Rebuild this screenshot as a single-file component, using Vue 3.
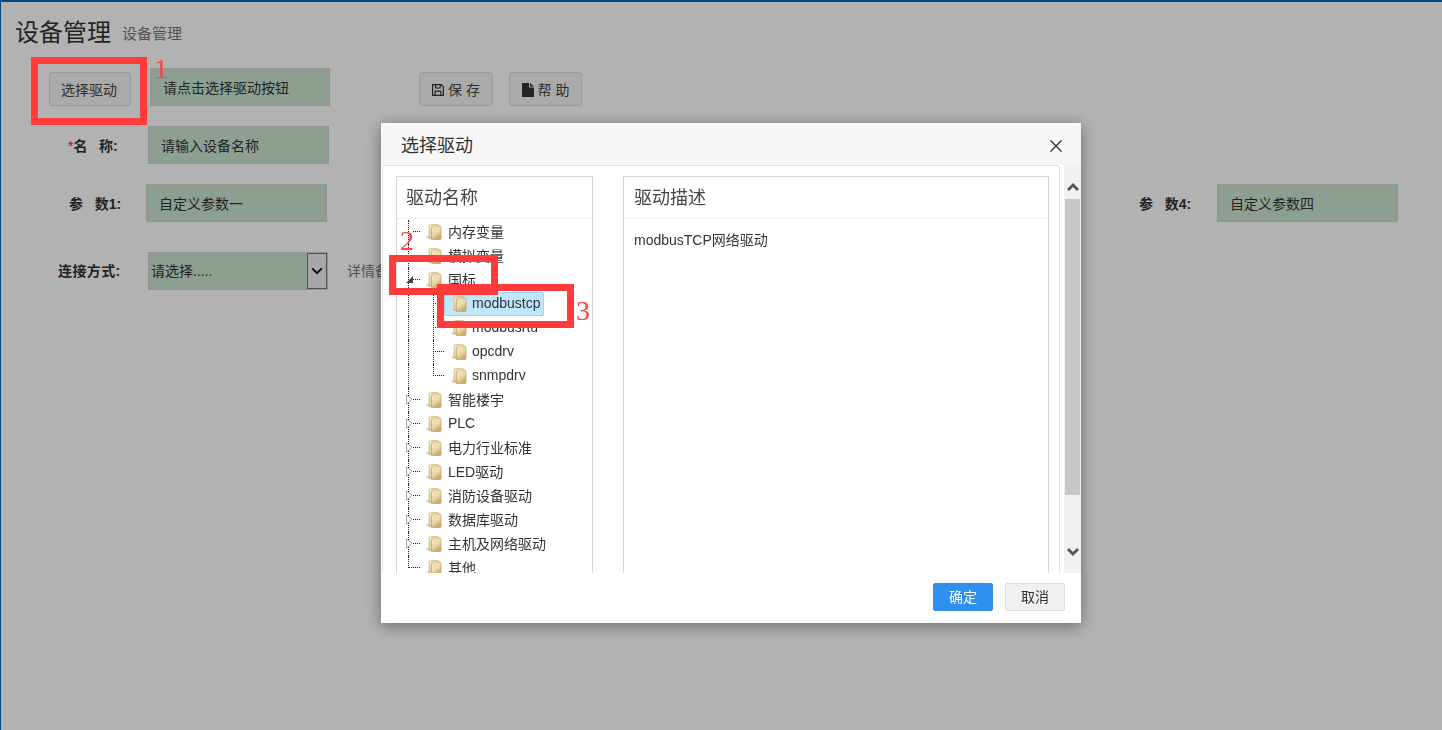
<script setup>
const nodes = [
  { name: '内存变量', kind: 'leaf' },
  { name: '模拟变量', kind: 'leaf' },
  { name: '国标', kind: 'open' },
  { name: 'modbustcp', kind: 'child', selected: true, latin: true },
  { name: 'modbusrtu', kind: 'child', latin: true },
  { name: 'opcdrv', kind: 'child', latin: true },
  { name: 'snmpdrv', kind: 'child', last: true, latin: true },
  { name: '智能楼宇', kind: 'closed' },
  { name: 'PLC', kind: 'closed', latin: true },
  { name: '电力行业标准', kind: 'closed' },
  { name: 'LED驱动', kind: 'closed' },
  { name: '消防设备驱动', kind: 'closed' },
  { name: '数据库驱动', kind: 'closed' },
  { name: '主机及网络驱动', kind: 'closed' },
  { name: '其他', kind: 'leaf', end: true }
]
</script>

<template>
  <div class="page">
    <svg class="defs" aria-hidden="true">
      <defs>
        <linearGradient id="folderFront" x1="0" y1="0" x2="0.5" y2="1">
          <stop offset="0" stop-color="#f3e6c4" />
          <stop offset="0.6" stop-color="#ecd9a8" />
          <stop offset="1" stop-color="#c9a968" />
        </linearGradient>
        <linearGradient id="folderBack" x1="0" y1="0" x2="0" y2="1">
          <stop offset="0" stop-color="#f7efd9" />
          <stop offset="1" stop-color="#dcc48c" />
        </linearGradient>
      </defs>
    </svg>

    <header class="title-row">
      <h1 class="title">设备管理</h1>
      <span class="subtitle">设备管理</span>
    </header>

    <section class="form">
      <div class="row row-first">
        <button class="btn btn-select">选择驱动</button>
        <div class="field field-driver">请点击选择驱动按钮</div>
        <button class="btn btn-save">
          <svg class="btn-icon" viewBox="0 0 12 12">
            <path fill="#333" fill-rule="evenodd" d="M0 0h9.500L12 2.500V12H0zM1.200 1.200v9.600h1.300V6.500h7v4.300h1.300V3L9 1.200h-.2v3.300H3V1.200zM4.200 1.200v2.200h3.400V1.200zM3.700 7.700v3.100h4.600V7.700z" />
          </svg>
          <span>保 存</span>
        </button>
        <button class="btn btn-help">
          <svg class="btn-icon btn-icon-file" viewBox="0 0 12 14">
            <path fill="#333" d="M0 0h7v4.500h5V14H0zM8 0l4 3.500H8z" />
          </svg>
          <span>帮 助</span>
        </button>
      </div>

      <div class="row row-name">
        <label class="label label-name"><i class="req">*</i>名&nbsp;&nbsp;&nbsp;称:</label>
        <div class="field">请输入设备名称</div>
      </div>

      <div class="row row-params">
        <label class="label label-param">参&nbsp;&nbsp;&nbsp;数1:</label>
        <div class="field">自定义参数一</div>
        <label class="label label-param4">参&nbsp;&nbsp;&nbsp;数4:</label>
        <div class="field">自定义参数四</div>
      </div>

      <div class="row row-conn">
        <label class="label label-conn">连接方式:</label>
        <div class="select">
          <span class="select-text">请选择.....</span>
          <span class="select-arrow">
            <svg viewBox="0 0 12 8" width="12" height="8">
              <path d="M1.200 1.400 6 6.200l4.800-4.800" fill="none" stroke="#111" stroke-width="2" />
            </svg>
          </span>
        </div>
        <span class="detail">详情备注</span>
      </div>
    </section>

    <div class="backdrop"></div>

    <div class="modal">
      <div class="modal-head">
        <span class="modal-title">选择驱动</span>
        <svg class="close" viewBox="0 0 12 12" width="12" height="12">
          <path d="M.5.5l11 11M11.500.5l-11 11" stroke="#333" stroke-width="1.400" fill="none" />
        </svg>
      </div>

      <div class="modal-body">
        <div class="scroll-area">
          <div class="panels">
            <div class="panel panel-tree">
              <div class="panel-title">驱动名称</div>
              <ul class="tree">
                <li
                  v-for="node in nodes"
                  :key="node.name"
                  class="node"
                  :class="{ 'node-child': node.kind === 'child', 'node-end': node.end, 'node-last': node.last }"
                >
                  <span class="trunk"></span>
                  <span class="branch" v-if="node.kind === 'child'"></span>
                  <svg v-if="node.kind === 'closed'" class="tog tog-closed" viewBox="0 0 7 11" width="7" height="11">
                    <path d="M.5.8v9.400L6 5.500z" fill="#fff" stroke="#a8a8a8" />
                  </svg>
                  <svg v-if="node.kind === 'open'" class="tog tog-open" viewBox="0 0 7 7" width="7" height="7">
                    <path d="M7 0v7H0z" fill="#444" />
                  </svg>
                  <span class="node-label" :class="{ selected: node.selected }">
                    <svg class="folder" viewBox="0 0 16 16" width="16" height="16">
                      <ellipse cx="2.500" cy="13" rx="2.300" ry="1.800" fill="#dcdcd6" />
                      <path d="M3 2q0-1.500 1.500-1.500h7q1.500 0 1.500 1.500v12.500H3z" fill="url(#folderBack)" stroke="#c9b27e" stroke-width=".7" />
                      <path d="M5.500 3.500q0-1.500 1.500-1.500h6.500q1.500 0 1.500 1.500v11q0 1-1 1H5.500z" fill="url(#folderFront)" stroke="#bfa268" stroke-width=".7" />
                    </svg>
                    <span class="node-name" :class="{ latin: node.latin }">{{ node.name }}</span>
                  </span>
                </li>
              </ul>
            </div>

            <div class="panel panel-desc">
              <div class="panel-title">驱动描述</div>
              <p class="desc">modbusTCP网络驱动</p>
            </div>
          </div>
        </div>

        <div class="scrollbar">
          <div class="sb-up">
            <svg viewBox="0 0 12 8" width="12" height="8">
              <path d="M1 7l5-5 5 5" fill="none" stroke="#555" stroke-width="2.800" />
            </svg>
          </div>
          <div class="sb-thumb"></div>
          <div class="sb-space"></div>
          <div class="sb-down">
            <svg viewBox="0 0 12 8" width="12" height="8">
              <path d="M1 1l5 5 5-5" fill="none" stroke="#555" stroke-width="2.800" />
            </svg>
          </div>
        </div>
      </div>

      <div class="modal-foot">
        <button class="foot-btn foot-ok">确定</button>
        <button class="foot-btn foot-cancel">取消</button>
      </div>
    </div>

    <div class="mark mark-1"></div>
    <div class="mark mark-2"></div>
    <div class="mark mark-3"></div>
    <span class="mark-num num-1">1</span>
    <span class="mark-num num-2">2</span>
    <span class="mark-num num-3">3</span>
  </div>
</template>

<style>
html, body { margin: 0; padding: 0; background: #fff; overflow: hidden; }
</style>

<style scoped>
* { box-sizing: border-box; }
.page {
  height: 730px;
  border-top: 2px solid #0567b1;
  border-left: 1px solid #0567b1;
  background: #fff;
  color: #333;
  font: 14px/20px "Liberation Sans", "Noto Sans CJK SC", sans-serif;
  overflow: hidden;
}
.defs { position: absolute; width: 0; height: 0; }

.title-row { display: flex; align-items: flex-start; padding: 16px 0 0 14px; height: 66px; }
.title { margin: 0; font-size: 24px; line-height: 30px; font-weight: 400; color: #333; }
.subtitle { margin: 6px 0 0 11px; font-size: 15px; color: #777; }

.form { display: flex; flex-direction: column; }
.row { display: flex; height: 38px; align-items: center; }
.row-name, .row-params { margin-top: 20px; }
.row-conn { margin-top: 30px; }

.field {
  width: 181px;
  height: 38px;
  padding-left: 12px;
  line-height: 38px;
  background: #cbe4d0;
  border: 1px solid #d0d6d2;
  color: #333;
}
.field-driver { width: 180px; margin-left: 19px; }

.btn {
  display: inline-flex;
  align-items: center;
  justify-content: center;
  height: 34px;
  margin-top: 4px;
  background: #f4f4f4;
  border: 1px solid #ddd;
  border-radius: 3px;
  color: #444;
  font: inherit;
  padding: 1px 0 0;
}
.btn-select { margin-left: 48px; width: 82px; padding-right: 2px; }
.btn-save { margin-left: 89px; width: 74px; }
.btn-help { margin-left: 16px; width: 73px; }
.btn-icon { width: 12px; height: 12px; margin-right: 4px; }
.btn-icon-file { height: 14px; }

.label { font-weight: 700; color: #333; white-space: nowrap; margin-top: 2px; }
.req { color: #e02020; font-style: normal; font-weight: 400; }
.label-name { margin-left: 67px; width: 80px; }
.label-param { margin-left: 68px; width: 77px; }
.label-param4 { margin-left: auto; width: 78px; }
.row-params { padding-right: 44px; }
.label-conn { margin-left: 57px; margin-top: 0; width: 90px; letter-spacing: .4px; }

.select {
  width: 180px;
  height: 38px;
  display: flex;
  background: #cbe4d0;
  border: 1px solid #d0d6d2;
}
.select-text { flex: 1; padding-left: 2px; line-height: 37px; }
.select-arrow {
  width: 20px;
  height: 36px;
  display: flex;
  align-items: center;
  justify-content: center;
  background: #efefef;
  border: 1px solid #767676;
}
.detail { margin-left: 19px; color: #777; white-space: nowrap; }

.backdrop { position: fixed; inset: 0; background: rgba(0, 0, 0, .3); }

.modal {
  position: fixed;
  left: 381px;
  top: 123px;
  width: 700px;
  height: 500px;
  background: #fff;
  box-shadow: 0 3px 15px rgba(0, 0, 0, .4);
}
.modal-head {
  height: 42px;
  background: #f7f7f7;
  display: flex;
  align-items: center;
  justify-content: space-between;
  padding: 3px 19px 0 20px;
}
.modal-title { font-size: 18px; line-height: 24px; color: #333; }

.modal-body { display: flex; height: 408px; }
.scroll-area {
  width: 678px;
  margin-left: 1px;
  height: 408px;
  overflow: hidden;
  border: 1px solid #dfe1e8;
  border-bottom: 0;
  border-radius: 4px 4px 0 0;
  padding: 10px 0 0 13px;
}
.panels { display: flex; gap: 30px; }
.panel { border: 1px solid #d2d6e0; height: 600px; }
.panel-tree { width: 197px; }
.panel-desc { width: 426px; }
.panel-title {
  height: 42px;
  padding-left: 9px;
  font-size: 18px;
  line-height: 42px;
  color: #444;
  border-bottom: 1px solid #eee;
}
.panel-desc .panel-title { padding-left: 10px; }
.desc { margin: 11px 0 0 10px; font-size: 14px; line-height: 20px; color: #333; }

.tree { list-style: none; margin: 0; padding: 1px 0 0 8px; }
.node { position: relative; display: flex; align-items: center; height: 24px; padding-left: 15px; }
.node-child { padding-left: 39px; }
.trunk {
  position: absolute;
  left: 3px;
  top: 0;
  bottom: 0;
  border-left: 1px dotted #222;
}
.node-end .trunk { bottom: 12px; }
.node::after {
  content: "";
  position: absolute;
  left: 8px;
  top: 11px;
  width: 7px;
  border-top: 1px dotted #222;
}
.node-end::after { left: 4px; width: 11px; }
.node-child::after { left: 28px; width: 11px; }
.branch {
  position: absolute;
  left: 28px;
  top: 0;
  bottom: 0;
  border-left: 1px dotted #222;
}
.node-last .branch { bottom: 12px; }
.tog { position: absolute; left: 1px; }
.tog-closed { top: 6px; }
.tog-open { top: 8px; }
.node-label {
  display: flex;
  align-items: center;
  height: 24px;
  padding: 0 3px 0 6px;
  border: 1px solid transparent;
  border-left-width: 0;
  border-right-width: 0;
  border-radius: 2px;
}
.node-child .node-label { padding-left: 7px; }
.node-label.selected { background: #bfe6fb; border: 1px solid #9fd4ee; padding-left: 6px; }
.folder { flex: none; margin-right: 6px; }
.node-child .folder { margin-right: 5px; }
.node-name { color: #333; white-space: nowrap; line-height: 20px; }
.node-name.latin { position: relative; top: -1px; }

.scrollbar {
  width: 17px;
  margin-left: 4px;
  height: 408px;
  background: #f1f1f1;
  display: flex;
  flex-direction: column;
  align-items: center;
}
.sb-up { height: 34px; padding-top: 18px; display: flex; justify-content: center; width: 100%; }
.sb-thumb { width: 15px; height: 296px; background: #c8c8c8; flex: none; }
.sb-space { flex: 1; }
.sb-down { height: 44px; padding-top: 1px; display: flex; align-items: center; justify-content: center; width: 100%; }

.modal-foot { display: flex; justify-content: flex-end; gap: 12px; padding: 10px 16px 0; }
.foot-btn {
  width: 60px;
  height: 28px;
  padding: 0;
  border-radius: 2px;
  font: inherit;
  line-height: 26px;
}
.foot-ok { background: #2f90ef; border: 1px solid #2f90ef; color: #fff; }
.foot-cancel { background: #f0f0f0; border: 1px solid #ddd; color: #333; }

.mark { position: fixed; border: 7px solid #ff3b3b; }
.mark-1 { left: 31px; top: 57px; width: 116px; height: 68px; }
.mark-2 { left: 389px; top: 255px; width: 109px; height: 40px; }
.mark-3 { left: 437px; top: 284px; width: 137px; height: 44px; }
.mark-num { position: fixed; font: 28px/30px "Liberation Serif", serif; color: #ff4040; }
.num-1 { left: 154px; top: 54px; }
.num-2 { left: 400px; top: 226px; }
.num-3 { left: 576px; top: 296px; }
</style>
